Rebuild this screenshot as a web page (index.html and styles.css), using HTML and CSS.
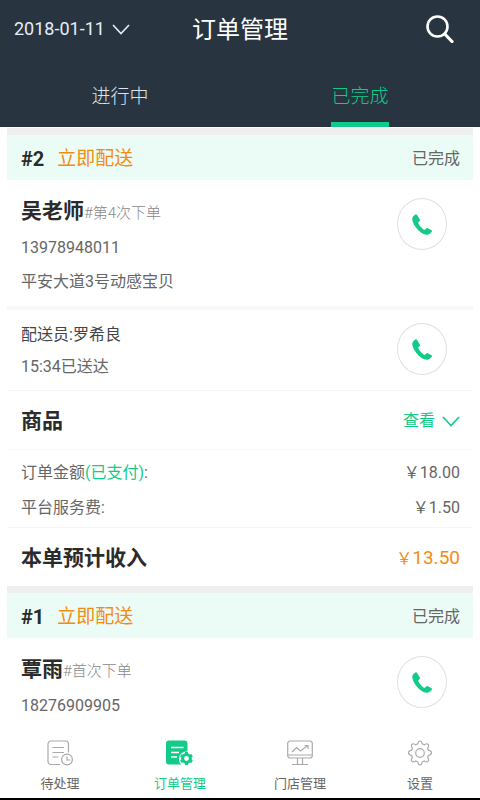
FILE: index.html
```html
<!DOCTYPE html>
<html lang="zh-CN">
<head>
<meta charset="utf-8">
<meta name="viewport" content="width=device-width, initial-scale=1">
<title>订单管理</title>
<link rel="stylesheet" href="styles.css">
</head>
<body>
<svg class="defs" aria-hidden="true">
  <symbol id="phone" viewBox="0 0 20 21">
    <path d="M3.4.4C1.5 1.500.200 3 .200 5.200c.300 3.600 3 8 6.300 11.200 3 2.900 6.500 4.500 9 4.300 1.800-.2 3.500-1.700 4.400-3.200.3-.6.100-1-.4-1.300l-3.700-2c-.5-.3-1-.2-1.400.2l-1.200 1.200c-.4.3-.9.300-1.300.1-2.500-1.600-4.500-4-5.600-6.600-.2-.5 0-.9.300-1.200l1.100-.9c.4-.4.500-.8.300-1.300L5.100.9C4.700.3 4.100 0 3.400.4z"/>
  </symbol>
  <symbol id="chevron" viewBox="0 0 18 11">
    <path d="M1 1l8 8.500L17 1" fill="none" stroke="currentColor" stroke-width="1.600"/>
  </symbol>
</svg>
<div class="app">
  <header class="top">
    <div class="bar">
      <button class="date" type="button">2018-01-11<svg class="chevron"><use href="#chevron"/></svg></button>
      <h1 class="title">订单管理</h1>
      <button class="search" type="button" aria-label="搜索">
        <svg viewBox="0 0 28 28"><circle cx="11.500" cy="11.500" r="10" fill="none" stroke="currentColor" stroke-width="2.600"/><path d="M18.800 19l7.200 7.500" stroke="currentColor" stroke-width="3.200" stroke-linecap="round"/></svg>
      </button>
    </div>
    <nav class="tabs">
      <a class="tab" href="#doing"><span>进行中</span></a>
      <a class="tab active" href="#done" aria-current="page"><span>已完成</span></a>
    </nav>
  </header>
  <main class="list">
    <article class="order">
      <div class="order-head"><strong>#2</strong><span class="kind">立即配送</span><span class="state">已完成</span></div>
      <section class="person customer">
        <div class="info">
          <h2 class="name">吴老师<small>#第4次下单</small></h2>
          <p>13978948011</p>
          <p>平安大道3号动感宝贝</p>
        </div>
        <button class="call" type="button" aria-label="拨打顾客电话"><svg><use href="#phone"/></svg></button>
      </section>
      <section class="person courier">
        <div class="info">
          <p class="dark">配送员:罗希良</p>
          <p>15:34已送达</p>
        </div>
        <button class="call" type="button" aria-label="拨打配送员电话"><svg><use href="#phone"/></svg></button>
      </section>
      <section class="row goods">
        <h2>商品</h2>
        <button class="view" type="button">查看<svg class="chevron"><use href="#chevron"/></svg></button>
      </section>
      <dl class="fees">
        <div><dt>订单金额<span class="paid">(已支付)</span>:</dt><dd>￥18.00</dd></div>
        <div><dt>平台服务费:</dt><dd>￥1.50</dd></div>
      </dl>
      <section class="row income">
        <h2>本单预计收入</h2>
        <span class="amount"><small>￥</small>13.50</span>
      </section>
    </article>
    <article class="order">
      <div class="order-head"><strong>#1</strong><span class="kind">立即配送</span><span class="state">已完成</span></div>
      <section class="person customer">
        <div class="info">
          <h2 class="name">覃雨<small>#首次下单</small></h2>
          <p>18276909905</p>
        </div>
        <button class="call" type="button" aria-label="拨打顾客电话"><svg><use href="#phone"/></svg></button>
      </section>
    </article>
  </main>
  <nav class="bottom">
    <a href="#pending">
      <svg viewBox="0 0 26 26"><path d="M13 24.500H4A3 3 0 0 1 1 21.500V4A3 3 0 0 1 4 1h14.500a3 3 0 0 1 3 3v8.500M5.500 7.500h11.500M5.500 12.500h11.500M5.500 17h6"/><circle cx="20" cy="19.500" r="5.400"/><path d="M20 16.500v3.500h3"/></svg>
      <span>待处理</span>
    </a>
    <a class="active" href="#orders" aria-current="page">
      <svg viewBox="0 0 26 26"><path class="solid" d="M2 .500h15.500a3 3 0 0 1 3 3v8a7.500 7.500 0 0 0-8.500 7.500c0 2.200.8 4.200 2.200 5.500H2a3 3 0 0 1-3-3V3.500a3 3 0 0 1 3-3z"/><path class="cut" d="M4 7.500h12.500M4 12.500h8M4 17h6"/><circle class="ring" cx="19.500" cy="18.500" r="3.900"/><path class="teeth" d="M19.500 12v2.500M19.500 22.500v2.500M13.900 15.200l2.100 1.300M23 20.500l2.100 1.300M13.900 21.800l2.100-1.300M23 16.500l2.100-1.300"/></svg>
      <span>订单管理</span>
    </a>
    <a href="#store">
      <svg viewBox="0 0 26 26"><rect x=".700" y="1" width="24.600" height="17" rx="2.500"/><path d="M1 15h24M10.500 18v6.500M15.500 18v6.500M5 24.500h16M5 12l4.500-4.500 4 3.500L20 6M17.500 5.500H21V9"/></svg>
      <span>门店管理</span>
    </a>
    <a href="#settings">
      <svg viewBox="0 0 26 26"><path d="M10.800 3.900Q11.200 1 13 1t2.200 2.900l2.200.9q2.400-1.800 3.700-.5t-.5 3.900l.9 2.200q3 .4 3 2.400t-3 2.500l-.9 2.200q1.800 2.400.5 3.800t-3.700-.4l-2.200.9q-.4 3.200-2.200 3.200t-2.200-3.200l-2.200-.9q-2.400 1.800-3.700.4t.5-3.800l-.9-2.200q-3-.4-3-2.500t3-2.400l.9-2.200Q3.600 5.600 4.900 4.300t3.700.5z"/><circle cx="13" cy="13" r="4.300"/></svg>
      <span>设置</span>
    </a>
  </nav>
</div>
</body>
</html>
```

FILE: styles.css
```css
* { box-sizing: border-box; }
body, h1, h2, p, dl, dd { margin: 0; }
body {
  background: #fff;
  color: #666;
  font: 16px/24px Roboto, "Noto Sans CJK SC", sans-serif;
}
button {
  background: none;
  border: 0;
  padding: 0;
  color: inherit;
  font: inherit;
}
a { color: inherit; text-decoration: none; }
svg { display: block; fill: currentColor; }
.defs { position: absolute; width: 0; height: 0; }
.chevron { width: 18px; height: 11px; }

.app {
  display: flex;
  flex-direction: column;
  height: 100vh;
  border-bottom: 2px solid #000;
}

.top { flex: none; background: #283540; color: #fff; }
.bar {
  display: grid;
  grid-template-columns: 1fr auto 1fr;
  align-items: center;
  height: 58px;
  padding: 0 26px 0 14px;
}
.date {
  display: flex;
  align-items: center;
  gap: 7px;
  color: #e6ecf5;
  font-size: 18px;
}
.title { font-size: 24px; font-weight: 400; line-height: 32px; margin-left: 12px; padding-top: 2px; }
.search { justify-self: end; }
.search svg { width: 28px; height: 28px; }
.tabs { display: flex; height: 69px; }
.tab {
  flex: 1;
  display: flex;
  justify-content: center;
  color: #dde4ee;
  font-size: 19px;
  font-weight: 300;
}
.tab span { padding-top: 27px; border-bottom: 5px solid transparent; }
.tab.active { color: #12cb88; }
.tab.active span { border-color: #12cb88; }

.list { flex: 1; min-height: 0; overflow: hidden; padding: 1px 7px 0; }
.order { border-top: 7px solid #f0efef; }
.order-head {
  display: flex;
  align-items: center;
  height: 45px;
  padding: 2px 13px 0 14px;
  background: #ebfcf7;
}
.order-head strong { color: #2b2b2b; font-size: 20px; }
.kind { margin-left: 13px; color: #f28c13; font-size: 19px; }
.state { margin-left: auto; }

.person {
  display: flex;
  justify-content: space-between;
  align-items: flex-start;
  padding: 0 26px 0 14px;
}
.info { display: flex; flex-direction: column; }
.customer { padding-top: 18px; padding-bottom: 12px; border-bottom: 4px solid #f8f8f8; }
.customer .info { gap: 10px; }
.courier { padding-top: 13px; padding-bottom: 11px; border-bottom: 1px solid #f4f4f4; }
.courier .info { gap: 8px; }
.dark { color: #444; }
h2 { color: #2b2b2b; font-size: 21px; font-weight: 700; line-height: 26px; }
.name small { color: #888; font-size: 15px; font-weight: 300; }
.call {
  display: grid;
  place-items: center;
  width: 50px;
  height: 52px;
  border: 1px solid #e0e0e0;
  border-radius: 50%;
  color: #12cb88;
}
.call svg { width: 20px; height: 21px; }

.row {
  display: flex;
  justify-content: space-between;
  align-items: center;
  height: 58px;
  padding: 2px 13px 0 14px;
}
.goods { height: 59px; border-bottom: 1px solid #f8f8f8; }
.view { display: flex; align-items: center; gap: 7px; color: #12cb88; }
.fees {
  display: grid;
  gap: 11px;
  padding: 11px 13px 7px 14px;
  border-bottom: 1px solid #f4f4f4;
}
.fees div { display: flex; justify-content: space-between; }
.paid { color: #12cb88; }
.amount { color: #f28c13; font-size: 19px; }
.amount small { font-size: 16px; }

.bottom { flex: none; display: flex; height: 68px; background: #fff; }
.bottom a {
  flex: 1;
  display: flex;
  flex-direction: column;
  align-items: center;
  gap: 8px;
  padding-top: 10px;
  color: #666;
  font-size: 13px;
  line-height: 20px;
}
.bottom svg { width: 26px; height: 26px; overflow: visible; fill: none; stroke: #aaa; stroke-width: 1.2; }
.bottom a.active { color: #12cb88; }
.bottom .solid { fill: #12cb88; stroke: none; }
.bottom .cut { stroke: #fff; stroke-width: 1.5; }
.bottom .ring { stroke: #12cb88; stroke-width: 3; }
.bottom .teeth { stroke: #12cb88; stroke-width: 3; }
```
